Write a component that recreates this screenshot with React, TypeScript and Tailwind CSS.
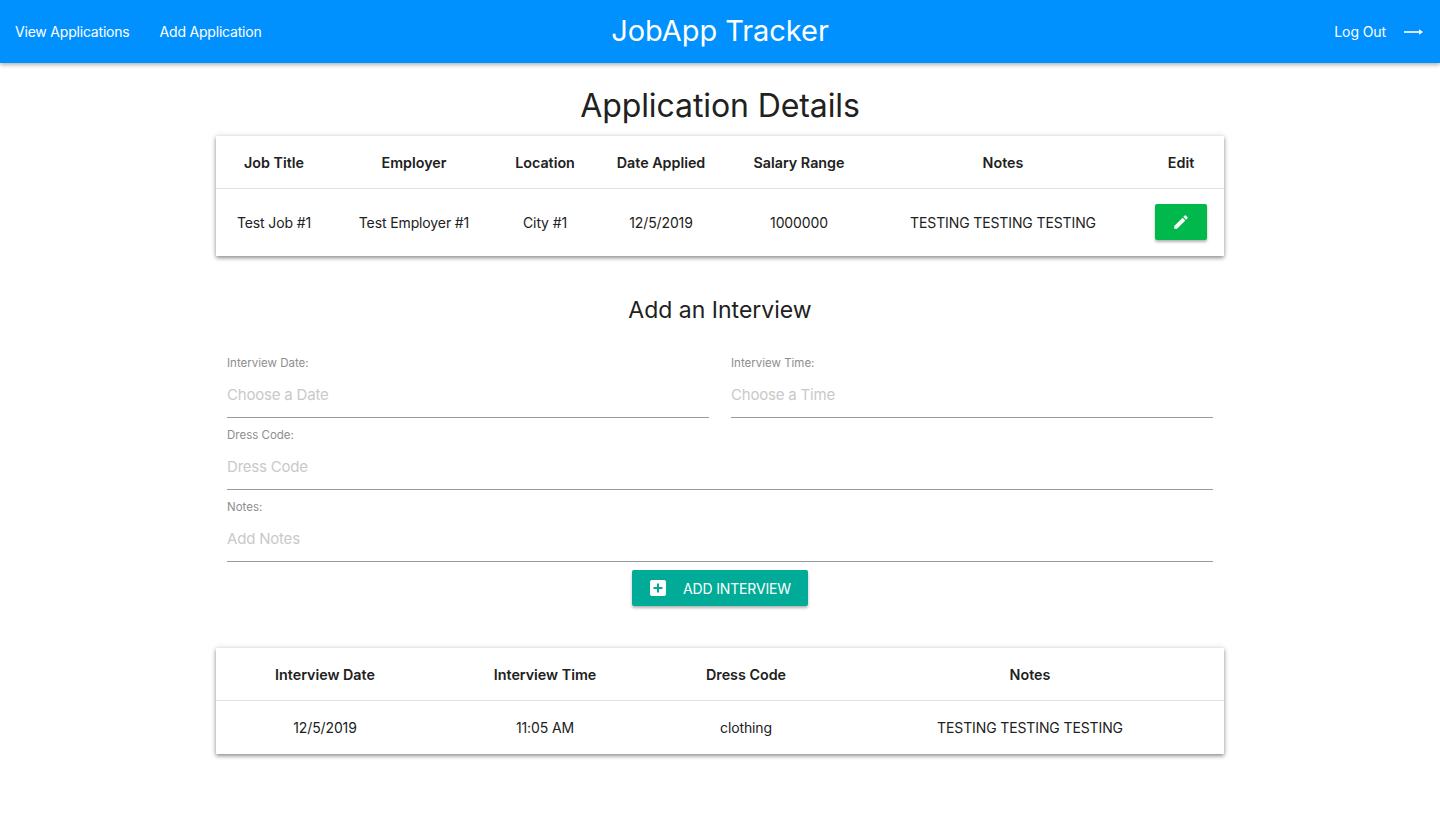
import React from 'react'

const Field = ({ label, placeholder }: { label: string; placeholder: string }) => (
  <div className="flex-1 h-[72px] flex flex-col">
    <label className="text-[11.5px] leading-[14px] mt-[3px] text-[#8e8e8e]">{label}</label>
    <input
      readOnly
      placeholder={placeholder}
      className="mt-[2px] h-[46px] w-full text-[15px] tracking-[-0.2px] outline-none border-b border-[#999999] placeholder:text-[#c9c9c9]"
    />
  </div>
)

const appCols = 'grid grid-cols-[116px_164px_98px_134px_142px_266px_88px]'
const intCols = 'grid grid-cols-[218px_222px_180px_388px]'

const appHeaders = ['Job Title', 'Employer', 'Location', 'Date Applied', 'Salary Range', 'Notes']
const appRow = ['Test Job #1', 'Test Employer #1', 'City #1', '12/5/2019', '1000000', 'TESTING TESTING TESTING']
const intHeaders = ['Interview Date', 'Interview Time', 'Dress Code', 'Notes']
const intRow = ['12/5/2019', '11:05 AM', 'clothing', 'TESTING TESTING TESTING']

const cardShadow = 'shadow-[0_2px_4px_rgba(0,0,0,0.4),0_0_6px_rgba(0,0,0,0.12)]'

export default function App() {
  return (
    <div className="min-h-[820px] bg-white text-[#212121] font-['Inter',sans-serif]">
      {/* Nav */}
      <header className="relative h-[63px] bg-[#0091ff] text-white flex items-center justify-between px-[15px] shadow-[0_2px_4px_rgba(0,0,0,0.3)]">
        <div className="flex items-center gap-[30px] text-[14px] tracking-[-0.2px]">
          <a>View Applications</a>
          <a>Add Application</a>
        </div>
        <h1 className="absolute left-0 right-0 text-center text-[29px] tracking-[-0.05px] leading-none pb-[2px] pointer-events-none">JobApp Tracker</h1>
        <div className="flex items-center gap-[18px] text-[14px] tracking-[-0.1px] mr-[2px]">
          <span>Log Out</span>
          <svg width="19" height="8" viewBox="0 0 19 8" fill="white">
            <rect x="0" y="3.2" width="16" height="1.6" />
            <path d="M15 1.2L19 4L15 6.8z" />
          </svg>
        </div>
      </header>

      <main className="w-[1008px] mx-auto">
        <h2 className="text-[32px] leading-[40px] text-center pt-[23px] tracking-[-0.1px]">Application Details</h2>

        <div className={`mt-[10px] bg-white ${cardShadow}`}>
          <div className={`${appCols} h-[53px] items-center border-b border-[#e0e0e0] pt-[1px] text-[14.3px] font-semibold text-center`}>
            {appHeaders.map(h => <div key={h}>{h}</div>)}
            <div className="pl-[2px]">Edit</div>
          </div>
          <div className={`${appCols} h-[67px] items-center text-[14px] tracking-[-0.12px] text-center`}>
            {appRow.map(c => <div key={c}>{c}</div>)}
            <div className="flex justify-center pl-[2px] pb-[2px]">
              <button className="w-[52px] h-[36px] bg-[#00b84c] rounded-[2px] flex items-center justify-center shadow-[0_2px_3px_rgba(0,0,0,0.3)]">
                <svg width="18" height="18" viewBox="0 0 24 24" fill="white">
                  <path d="M3 17.25V21h3.75L17.81 9.94l-3.75-3.75L3 17.25zM20.71 7.04a1 1 0 0 0 0-1.41l-2.34-2.34a1 1 0 0 0-1.41 0l-1.83 1.83 3.75 3.75 1.83-1.83z" />
                </svg>
              </button>
            </div>
          </div>
        </div>

        <h3 className="text-[23px] leading-[30px] text-center mt-[39px]">Add an Interview</h3>

        <form className="mt-[28px] px-[11px]">
          <div className="flex gap-[22px]">
            <Field label="Interview Date:" placeholder="Choose a Date" />
            <Field label="Interview Time:" placeholder="Choose a Time" />
          </div>
          <Field label="Dress Code:" placeholder="Dress Code" />
          <Field label="Notes:" placeholder="Add Notes" />
          <div className="flex justify-center mt-[1px]">
            <button type="button" className="w-[176px] h-[36px] bg-[#00ab97] rounded-[2px] text-white text-[14px] tracking-[-0.15px] flex items-center pl-[18px] shadow-[0_2px_3px_rgba(0,0,0,0.3)]">
              <svg width="16" height="16" viewBox="0 0 16 16">
                <rect width="16" height="16" rx="2" fill="white" />
                <path d="M8 3.5v9M3.5 8h9" stroke="#00ab97" strokeWidth="2" />
              </svg>
              <span className="ml-[17px]">ADD INTERVIEW</span>
            </button>
          </div>
        </form>

        <div className={`mt-[42px] bg-white ${cardShadow}`}>
          <div className={`${intCols} h-[53px] items-center border-b border-[#e0e0e0] pt-[1px] text-[14.3px] font-semibold text-center`}>
            {intHeaders.map(h => <div key={h}>{h}</div>)}
          </div>
          <div className={`${intCols} h-[53px] items-center text-[14px] tracking-[-0.12px] text-center`}>
            {intRow.map(c => <div key={c}>{c}</div>)}
          </div>
        </div>
      </main>
    </div>
  )
}
